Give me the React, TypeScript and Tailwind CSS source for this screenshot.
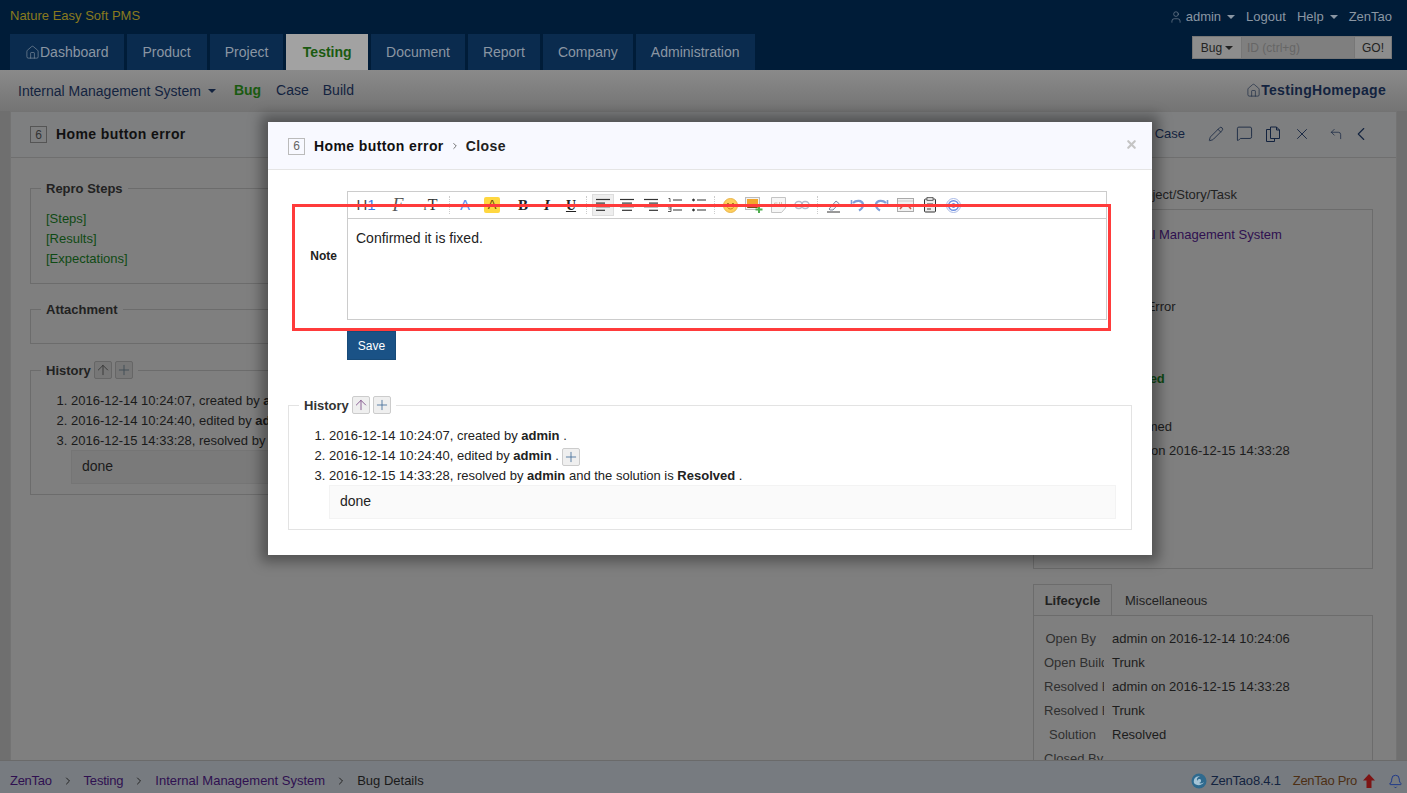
import React from 'react';
import { ChevronLeft, ChevronRight, Bell, CornerUpLeft, Home, MessageSquare, Pencil, Plus, ArrowUp, User, X } from 'lucide-react';

const NAV = ['Product', 'Project', 'Testing', 'Document', 'Report', 'Company', 'Administration'];

const Caret = ({ className }: { className: string }) => (
    <span className={`inline-block w-0 h-0 border-x-[4px] border-x-transparent border-t-[4px] ${className}`} />
);

const TinyButton = ({ dim, icon, className = '' }: { dim: boolean; icon: 'up' | 'plus'; className?: string }) => (
    <span className={`inline-flex w-[18px] h-[18px] items-center justify-center border rounded-[2px] align-middle ${dim ? 'bg-[#777] border-[#666]' : 'bg-[#efefef] border-[#ccc]'} ${className}`}>
        {icon === 'up' ? (
            <ArrowUp size={16} strokeWidth={1.3} className={dim ? 'text-[#333]' : 'text-[#7b4a86]'} />
        ) : (
            <Plus size={18} strokeWidth={1.3} className={dim ? 'text-[#3c4a55]' : 'text-[#47719a]'} />
        )}
    </span>
);

// same block on the page and in the dialog, only the colours differ
const History = ({ dim }: { dim: boolean }) => (
    <fieldset className={`border pb-[10px] ${dim ? 'border-[#6c6c6c] text-[#1a1a1a]' : 'border-[#e3e3e3] text-[#222]'}`}>
        <legend className={`ml-[10px] px-[5px] h-[20px] flex items-center gap-[3px] font-bold text-[13px] ${dim ? 'text-[#222]' : 'text-[#333]'}`}>
            <span className="mt-[2px]">History</span> <TinyButton dim={dim} icon="up" /> <TinyButton dim={dim} icon="plus" />
        </legend>
        <ol className="list-decimal ml-[25px] mr-[15px] pl-[15px] pt-[11px] text-[13px] leading-[20px]">
            <li>2016-12-14 10:24:07, created by <b>admin</b> .</li>
            <li>
                2016-12-14 10:24:40, edited by <b>admin</b> . <TinyButton dim={dim} icon="plus" className="-my-[3px]" />
            </li>
            <li>
                2016-12-15 14:33:28, resolved by <b>admin</b> and the solution is <b>Resolved</b> .
                <div className={`border -mt-px h-[34px] px-[10px] pb-[2px] flex items-center text-[14px] ${dim ? 'bg-[#7a7a7a] border-[#757575]' : 'bg-[#fafafa] border-[#f3f3f3]'}`}>done</div>
            </li>
        </ol>
    </fieldset>
);

const ToolIcon = ({ children, w = 'w-6' }: { children: React.ReactNode; w?: string }) => (
    <span className={`${w} h-[22px] flex items-center justify-center shrink-0`}>{children}</span>
);

const Sep = () => <span className="h-[18px] mx-[3px] border-l border-dotted border-[#ccc] shrink-0" />;

const Lines = ({ kind }: { kind: 'left' | 'center' | 'right' }) => {
    const rows = kind === 'left' ? [[1, 15], [1, 10], [1, 15], [1, 10]] : kind === 'center' ? [[1, 15], [3, 13], [1, 15], [3, 13]] : [[1, 15], [6, 15], [1, 15], [6, 15]];
    return (
        <svg width="16" height="14" viewBox="0 0 16 14" stroke="#333" strokeWidth="1.2">
            {rows.map(([a, b], i) => <line key={i} x1={a} x2={b} y1={1.5 + i * 3.6} y2={1.5 + i * 3.6} />)}
        </svg>
    );
};

const EditorToolbar = () => (
    <div className="h-[27px] flex items-center pl-[2px] border-b border-[#ccc]">
        <ToolIcon w="w-8"><span className="text-[15px] text-[#444]">H<span className="text-[#3b78e7]">1</span></span></ToolIcon>
        <ToolIcon w="w-8"><span className="text-[18px] italic font-['Liberation_Serif',serif] text-[#555] line-through">F</span></ToolIcon>
        <ToolIcon w="w-8"><span className="text-[16px] font-['Liberation_Serif',serif] text-[#333]"><span className="text-[9px]">T</span>T</span></ToolIcon>
        <Sep />
        <ToolIcon><span className="text-[15px] text-[#5b8def]">A</span></ToolIcon>
        <ToolIcon w="w-[30px]"><span className="w-4 h-4 rounded-[2px] bg-[#ffd740] text-[13px] text-[#6a4a00] flex items-center justify-center">A</span></ToolIcon>
        <span className="w-1" />
        <ToolIcon><span className="text-[15px] font-bold font-['Liberation_Serif',serif] text-[#222]">B</span></ToolIcon>
        <ToolIcon><span className="text-[15px] font-bold italic font-['Liberation_Serif',serif] text-[#222]">I</span></ToolIcon>
        <ToolIcon><span className="text-[14px] font-bold underline font-['Liberation_Serif',serif] text-[#222]">U</span></ToolIcon>
        <Sep />
        <span className="w-px" />
        <span className="w-[22px] h-[22px] mx-px flex items-center justify-center bg-[#eee] border border-[#ddd]"><Lines kind="left" /></span>
        <ToolIcon><Lines kind="center" /></ToolIcon>
        <ToolIcon><Lines kind="right" /></ToolIcon>
        <ToolIcon>
            <svg width="16" height="14" viewBox="0 0 16 14" stroke="#333" strokeWidth="1">
                <line x1="6" x2="15" y1="2" y2="2" /><line x1="6" x2="15" y1="12" y2="12" />
                <path d="M1.500 .5h1.500v3.500M1 9h3v2H1.500M4 11v2.500H1" fill="none" strokeWidth=".8" />
            </svg>
        </ToolIcon>
        <ToolIcon>
            <svg width="16" height="14" viewBox="0 0 16 14" stroke="#333" strokeWidth="1">
                <line x1="6" x2="15" y1="2" y2="2" /><line x1="6" x2="15" y1="12" y2="12" />
                <circle cx="2.500" cy="2" r=".9" fill="#333" /><circle cx="2.500" cy="12" r=".9" fill="#333" />
            </svg>
        </ToolIcon>
        <Sep />
        <ToolIcon>
            <svg width="15" height="15" viewBox="0 0 15 15">
                <circle cx="7.500" cy="7.500" r="7" fill="#ffcf5c" stroke="#e9b44c" />
                <circle cx="5" cy="6" r=".9" fill="#8a5a00" /><circle cx="10" cy="6" r=".9" fill="#8a5a00" />
                <path d="M4.500 9.500c1.500 2 4.500 2 6 0" fill="none" stroke="#c9801a" />
            </svg>
        </ToolIcon>
        <ToolIcon>
            <svg width="18" height="16" viewBox="0 0 18 16">
                <rect x=".5" y=".5" width="14" height="12" fill="#f4f4f4" stroke="#bbb" />
                <rect x="2" y="2" width="11" height="9" fill="#f1a62d" />
                <path d="M2 11l3-4 3 3 2-2 3 3z" fill="#7a4a12" />
                <path d="M13 9h2v2.500h2.500v2H15V16h-2v-2.500h-2.500v-2H13z" fill="#4fae4f" />
            </svg>
        </ToolIcon>
        <ToolIcon>
            <svg width="15" height="16" viewBox="0 0 15 16">
                <path d="M.5.500h14v10.500l-4 4.500H.5z" fill="#f6f6f6" stroke="#c4c4c4" />
                <path d="M3.500 6h3M3.500 6v3h3M8.500 5v4M10.500 5v4" stroke="#d5c0b0" fill="none" />
            </svg>
        </ToolIcon>
        <ToolIcon>
            <svg width="16" height="10" viewBox="0 0 16 10" fill="none" stroke="#b4bccb" strokeWidth="1.4">
                <rect x="1" y="1.500" width="7.500" height="7" rx="3.500" /><rect x="7.500" y="1.500" width="7.500" height="7" rx="3.500" />
            </svg>
        </ToolIcon>
        <Sep />
        <ToolIcon>
            <svg width="15" height="15" viewBox="0 0 15 15" fill="none">
                <path d="M3 11l7-8 3 2.500-6 6.500H4z" stroke="#7e8aa2" fill="#f2f4f8" />
                <line x1="1" x2="14" y1="14" y2="14" stroke="#333" />
            </svg>
        </ToolIcon>
        <ToolIcon>
            <svg width="15" height="15" viewBox="0 0 15 15" fill="none" stroke="#7f9fd8" strokeWidth="2.200">
                <path d="M3 5c3-3 9-3 10 1 .5 3-1.500 5-4 6.500" /><path d="M1.500 2v5h4.500" strokeWidth="1.600" />
            </svg>
        </ToolIcon>
        <ToolIcon>
            <svg width="15" height="15" viewBox="0 0 15 15" fill="none" stroke="#7f9fd8" strokeWidth="2.200">
                <path d="M12 5c-3-3-9-3-10 1-.5 3 1.500 5 4 6.500" /><path d="M13.500 2v5H9" strokeWidth="1.600" />
            </svg>
        </ToolIcon>
        <ToolIcon>
            <svg width="17" height="14" viewBox="0 0 17 14">
                <rect x=".5" y=".5" width="16" height="13" fill="#f2f2f2" stroke="#aaa" />
                <line x1="1" x2="16" y1="3" y2="3" stroke="#ccc" />
                <path d="M3 11l2.500-3M14 11l-2.500-3" stroke="#cc5a4a" strokeWidth="1.500" />
            </svg>
        </ToolIcon>
        <ToolIcon>
            <svg width="15" height="16" viewBox="0 0 15 16">
                <rect x="2.500" y="2" width="11" height="13" rx="1" fill="#eee" stroke="#333" />
                <rect x="5" y=".5" width="6" height="3" fill="#ddd" stroke="#555" strokeWidth=".8" />
                <path d="M5 7h6M5 9.500h6M5 12h4" stroke="#444" />
            </svg>
        </ToolIcon>
        <ToolIcon>
            <svg width="15" height="15" viewBox="0 0 15 15" fill="none">
                <circle cx="7.500" cy="7.500" r="7" stroke="#a9b9e6" />
                <circle cx="7.500" cy="7.500" r="4.800" stroke="#6f8fe0" strokeWidth="1.400" />
                <circle cx="7.500" cy="7.500" r="2.200" fill="#3b62d6" />
            </svg>
        </ToolIcon>
    </div>
);

const InfoRow = ({ label, children }: { label: string; children?: React.ReactNode }) => (
    <div className="flex h-6 items-center">
        <span className="w-[60px] pr-[8px] mr-[8px] text-right whitespace-nowrap overflow-hidden text-[#2f2f2f]">{label}</span>
        <span className="whitespace-nowrap text-[#1c1c1c]">{children}</span>
    </div>
);

const navClass = (item: string) => {
    if (item === 'Testing') return 'px-[16.5px] flex items-center bg-[#a2a2a2] text-[#1a5a10] font-bold';
    if (item === 'Product') return 'px-[16px] flex items-center bg-[#0a2b4e] text-[#8a96a3]';
    return 'px-[15px] flex items-center bg-[#0a2b4e] text-[#8a96a3]';
};

export default function App() {
    return (
        <div className="relative h-[793px] overflow-hidden flex flex-col bg-[#6f6f6f] font-['Liberation_Sans',Arial,sans-serif] text-[13px] text-[#1a1a1a]">
            {/* top bar */}
            <header className="h-[70px] shrink-0 bg-[#001c38] relative">
                <div className="h-[34px] pl-[10px] pr-[15px] flex items-center justify-between">
                    <span className="text-[13px] text-[#8a7a1e] -mt-[2px]">Nature Easy Soft PMS</span>
                    <div className="flex items-center text-[13px] text-[#8a96a3]">
                        <User size={14} strokeWidth={1} />
                        <span className="ml-[3px]">admin</span>
                        <Caret className="ml-[6px] border-t-[#8a96a3]" />
                        <span className="ml-[11px]">Logout</span>
                        <span className="ml-[11px]">Help</span>
                        <Caret className="ml-[6px] border-t-[#8a96a3]" />
                        <span className="ml-[11px]">ZenTao</span>
                    </div>
                </div>
                <div className="flex items-end justify-between pl-[10px] pr-[15px]">
                    <nav className="flex gap-[3px] h-[36px] text-[14px]">
                        <a className="px-[15px] flex items-center bg-[#0a2b4e] text-[#8a96a3]">
                            <Home size={15} strokeWidth={1} />Dashboard
                        </a>
                        {NAV.map(item => (
                            <a key={item} className={navClass(item)}>{item}</a>
                        ))}
                    </nav>
                    <div className="flex w-[200px] h-[23px] mb-[11px] bg-[#8a8a8a] text-[12px] text-[#222] border border-[#777]">
                        <span className="w-[48px] flex items-center justify-center gap-[3px] bg-[#8d8d8d]">Bug <Caret className="border-t-[#222]" /></span>
                        <span className="w-[114px] px-[5px] flex items-center bg-[#7f7f7f] text-[#666] border-x border-[#777]">ID (ctrl+g)</span>
                        <span className="flex-1 flex items-center justify-center bg-[#8d8d8d]">GO!</span>
                    </div>
                </div>
            </header>

            {/* sub menu */}
            <div className="h-[41px] shrink-0 pl-[18px] pr-[21px] flex items-center bg-gradient-to-b from-[#8a8a8a] to-[#747474] text-[#13233f]">
                <span className="text-[14px] mt-[2px]">Internal Management System</span>
                <Caret className="ml-[7px] border-t-[#13233f]" />
                <span className="ml-[18px] font-bold text-[14px] text-[#1a5a10]">Bug</span>
                <span className="ml-[15px] text-[14px]">Case</span>
                <span className="ml-[14px] text-[14px]">Build</span>
                <span className="ml-auto flex items-center font-bold text-[14px] tracking-[0.3px]"><Home size={15} strokeWidth={1} />TestingHomepage</span>
            </div>

            {/* main panel */}
            <main className="flex-1 min-h-0 mx-[10px] bg-[#7f7f7f] border border-[#737373] border-b-0 overflow-hidden">
                <div className="h-[46px] pl-[19px] pr-[24px] flex items-center bg-[#7e7f80] border-b border-[#6f6f6f]">
                    <span className="w-[17px] h-[17px] border border-[#555] flex items-center justify-center text-[12px] text-[#333]">6</span>
                    <span className="ml-[9px] font-bold text-[14px] tracking-[0.4px] text-[#111]">Home button error</span>
                    <div className="ml-auto flex items-center text-[#13233f] -mt-[2px]">
                        <span className="text-[13px] mr-[23px]">Case</span>
                        <Pencil size={16} strokeWidth={1.2} />
                        <MessageSquare size={17} strokeWidth={1.2} className="ml-[12px]" />
                        <svg width="16" height="16" viewBox="0 0 16 16" fill="none" stroke="currentColor" className="ml-[12px]">
                            <path d="M5.500 3.500H1.500v12h8v-3M5.500 1v11.500h9V4l-3-3z" /><path d="M11.500 1v3h3" />
                        </svg>
                        <X size={18} strokeWidth={1.2} className="ml-[12px]" />
                        <CornerUpLeft size={14} strokeWidth={1.2} className="ml-[18px]" />
                        <ChevronLeft size={22} strokeWidth={1.2} className="ml-[7px]" />
                    </div>
                </div>
                <div className="flex pl-[19px] pr-[23px]">
                    <div className="flex-1 min-w-0 pt-[21px] pr-[20px] flex flex-col gap-[16px]">
                        <fieldset className="border border-[#6c6c6c] pb-[15px] h-[105px]">
                            <legend className="ml-[10px] px-[5px] font-bold text-[13px] text-[#222]">Repro Steps</legend>
                            <div className="pl-[15px] pt-[10px] leading-[20px] text-[#0f4a14]">
                                <div>[Steps]</div>
                                <div>[Results]</div>
                                <div>[Expectations]</div>
                            </div>
                        </fieldset>
                        <fieldset className="border border-[#6c6c6c] h-[44px]">
                            <legend className="ml-[10px] px-[5px] font-bold text-[13px] text-[#222]">Attachment</legend>
                        </fieldset>
                        <History dim />
                    </div>
                    <aside className="w-[340px] shrink-0 pt-[24px]">
                        <div className="h-[27px] pb-[2px] flex items-center justify-end pr-[136px] text-[#222] whitespace-nowrap">Project/Story/Task</div>
                        <div className="h-[360px] border border-[#6c6c6c] pt-[13px] pl-[10px]">
                            <InfoRow label="Product"><span className="text-[#2f1050]">Internal Management System</span></InfoRow>
                            <InfoRow label="Module" />
                            <InfoRow label="Plan" />
                            <InfoRow label="Type">Code Error</InfoRow>
                            <InfoRow label="Severity" />
                            <InfoRow label="Priority" />
                            <InfoRow label="Status"><b className="-ml-[5px] text-[#0f4a14]">Resolved</b></InfoRow>
                            <InfoRow label="Activated" />
                            <InfoRow label="Confirmed">Confirmed</InfoRow>
                            <InfoRow label="Assigned">admin on 2016-12-15 14:33:28</InfoRow>
                        </div>
                        <div className="mt-[15px] h-[31px] flex items-center">
                            <span className="h-[31px] pt-[1px] w-[79px] border border-b-0 border-[#6c6c6c] bg-[#7f7f7f] flex items-center justify-center font-bold text-[#222]">Lifecycle</span>
                            <span className="ml-[13px] mt-[2px] text-[#222]">Miscellaneous</span>
                        </div>
                        <div className="border border-[#6c6c6c] pt-[11px] pb-[20px] pl-[10px]">
                            <InfoRow label="Open By">admin on 2016-12-14 10:24:06</InfoRow>
                            <InfoRow label="Open Build">Trunk</InfoRow>
                            <InfoRow label="Resolved By">admin on 2016-12-15 14:33:28</InfoRow>
                            <InfoRow label="Resolved Build">Trunk</InfoRow>
                            <InfoRow label="Solution">Resolved</InfoRow>
                            <InfoRow label="Closed By" />
                        </div>
                    </aside>
                </div>
            </main>

            {/* breadcrumb footer */}
            <footer className="h-[33px] shrink-0 pl-[10px] pr-[4px] pt-[8px] flex items-center bg-[#777b80] border-t border-[#6a6a6a] text-[#2f1050] relative">
                <span className="tracking-[-0.3px]">ZenTao</span>
                <ChevronRight size={12} strokeWidth={2} className="mx-[10px] text-[#222]" />
                <span className="tracking-[-0.2px]">Testing</span>
                <ChevronRight size={12} strokeWidth={2} className="mx-[10px] text-[#222]" />
                <span>Internal Management System</span>
                <ChevronRight size={12} strokeWidth={2} className="mx-[10px] text-[#222]" />
                <span className="text-[#1a1a1a]">Bug Details</span>
                <div className="ml-auto flex items-center">
                    <svg width="16" height="16" viewBox="0 0 16 16">
                        <circle cx="8" cy="8" r="7.500" fill="#2f6a8e" />
                        <path d="M3 10c2 3 8 3 10-1-1 1-3 2-5 1 2 0 3-3 1-4-2-.5-3 1-2 2-2-1-1-4 2-4.500C5 2.500 2 6 3 10z" fill="#a5c4d6" />
                    </svg>
                    <span className="ml-[4px] text-[#13233f] tracking-[-0.2px]">ZenTao8.4.1</span>
                    <span className="ml-[12px] text-[#4d2f14] tracking-[-0.3px]">ZenTao Pro</span>
                    <svg width="12" height="14" viewBox="0 0 12 14" className="ml-[6px]"><path d="M6 0l6 6.500H8.500V14h-5V6.500H0z" fill="#7d1414" /></svg>
                    <Bell size={15} strokeWidth={1.3} className="ml-[13px] text-[#0b2a8a]" />
                </div>
            </footer>

            {/* close dialog */}
            <div className="absolute left-[268px] top-[122px] w-[884px] h-[433px] bg-white shadow-[0_0_12px_7px_rgba(0,0,0,0.35)] text-[#222]">
                <div className="h-[48px] pl-[20px] pr-[14px] pt-[1px] flex items-center bg-[#f8f9ff] border-b border-[#e5e5e5]">
                    <span className="w-[17px] h-[17px] border border-[#bbb] flex items-center justify-center text-[12px] text-[#666]">6</span>
                    <span className="ml-[9px] font-bold text-[14px] tracking-[0.4px] text-[#111]">Home button error</span>
                    <ChevronRight size={10} strokeWidth={2} className="mx-[6px] text-[#555]" />
                    <span className="font-bold text-[14px] tracking-[0.4px] text-[#222]">Close</span>
                    <X size={13} strokeWidth={4} className="ml-auto -mt-[4px] text-[#c4c4c4]" />
                </div>
                <div className="pt-[21px] flex">
                    <label className="w-[69px] self-center text-right font-bold text-[12px]">Note</label>
                    <div className="ml-[10px] w-[760px] h-[129px] border border-[#ccc]">
                        <EditorToolbar />
                        <p className="px-2 pt-[9px] text-[14px] text-[#222]">Confirmed it is fixed.</p>
                    </div>
                </div>
                <button className="block ml-[79px] mt-[11px] w-[49px] h-[29px] bg-[#1a5286] border border-[#174a78] text-white text-[12px]">Save</button>
                <div className="mt-[35px] mx-[20px]">
                    <History dim={false} />
                </div>
            </div>

            {/* screenshot annotation */}
            <div className="absolute left-[292px] top-[204px] w-[819px] h-[127px] border-[3px] border-[#ff3b3b] pointer-events-none" />
        </div>
    );
}
